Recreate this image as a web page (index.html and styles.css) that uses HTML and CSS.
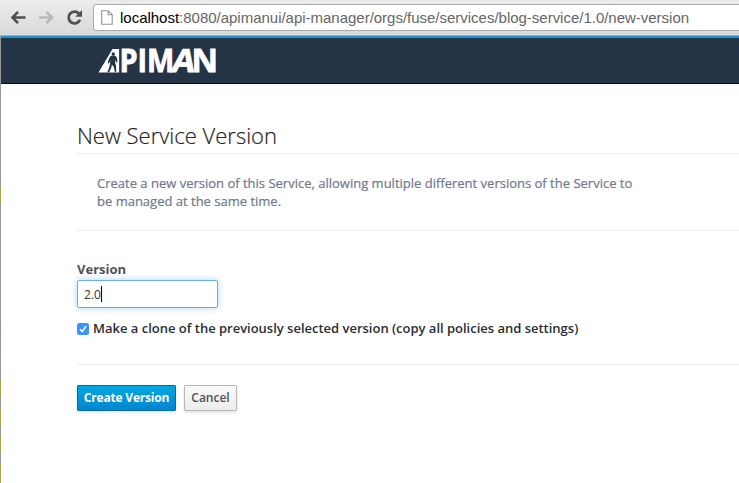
FILE: index.html
```html
<!DOCTYPE html>
<html lang="en">
<head>
<meta charset="utf-8">
<title>New Service Version</title>
<link rel="stylesheet" href="styles.css">
</head>
<body>
<div class="edge"></div>
<div class="window">
  <div class="toolbar">
    <svg class="nav" width="92" height="35" viewBox="0 0 92 35" fill="none">
      <path d="M25.5 17.5H12.5M18 11.8l-5.5 5.7 5.5 5.7" stroke="#505050" stroke-width="2.6"/>
      <path d="M39 17.5h13M46.5 11.8l5.5 5.7-5.5 5.7" stroke="#b9b9b9" stroke-width="2.6"/>
      <path d="M79 13.6A5.9 5.9 0 1 0 80 19.8" stroke="#505050" stroke-width="2.8"/>
      <path d="M82 10v6.8h-6.8z" fill="#505050"/>
    </svg>
    <div class="address">
      <svg class="page-icon" width="12" height="15" viewBox="0 0 12 15"><path d="M.7.7h6.5l4 4v9.6H.7zM7.2.7v4h4" fill="#fff" stroke="#929292" stroke-width="1.1"/></svg>
      <span class="url"><b>localhost</b>:8080/apimanui/api-manager/orgs/fuse/services/blog-service/1.0/new-version</span>
    </div>
  </div>
  <header class="masthead">
    <svg class="logo" width="130" height="45" viewBox="0 -10 130 45" role="img" aria-label="APIMAN">
      <path d="M0.5 24.5L14.5 1h6.6v23.5z" fill="#fff"/>
      <circle cx="15.3" cy="6" r="1.7" fill="#253347"/>
      <path d="M12 8.6l2.2-1 3 .2 1.8 2 .5 4.4-1.2.3-.9-3-.3 3 .9 3.2.3 6-1.5.2-1-4.8-1.9-2.7-.6 3.3-2.3 4.7-1.6-.3 1.9-4.8.8-4.1.3-3-1.1 2.9-1.7.5.9-3.6z" fill="#253347"/>
      <g class="wordmark">
        <text x="21.4" y="24.2" textLength="55" lengthAdjust="spacingAndGlyphs">PIM</text>
        <text x="0" y="0" transform="translate(72.5 24.2) skewX(-10)" textLength="23" lengthAdjust="spacingAndGlyphs">A</text>
        <text x="93.5" y="24.2" textLength="26.5" lengthAdjust="spacingAndGlyphs">N</text>
      </g>
    </svg>
  </header>
  <main class="content">
    <h1>New Service Version</h1>
    <p class="intro">Create a new version of this Service, allowing multiple different versions of the Service to<br>be managed at the same time.</p>
    <div class="form">
      <div class="label">Version</div>
      <div class="field">2.0<span class="caret"></span></div>
      <div class="check">
        <svg width="12" height="12" viewBox="0 0 12 12"><rect width="12" height="12" rx="2.5" fill="#3b93f7"/><path d="M3 6.3l2.2 2.3L9 3.2" fill="none" stroke="#fff" stroke-width="1.6"/></svg>
        <span>Make a clone of the previously selected version (copy all policies and settings)</span>
      </div>
    </div>
    <div class="actions">
      <div class="btn primary"><span>Create Version</span></div>
      <div class="btn"><span>Cancel</span></div>
    </div>
  </main>
</div>
</body>
</html>
```
FILE: styles.css
```css
* { box-sizing: border-box; }
body { margin: 0; height: 483px; overflow: hidden; display: flex; background: #fff; font-family: "Open Sans", sans-serif; }
.edge { width: 1px; flex: none; background: linear-gradient(#999 0 186px, #b0a44f 186px 203px, #999 203px 323px, #a18d90 323px 341px, #999 341px 380px, #b0a44f 380px 397px, #999 397px 408px, #b0a44f 408px 425px, #999 425px 436px, #b0a44f 436px 453px, #999 453px 464px, #b0a44f 464px); }
.window { flex: 1; min-width: 0; }
.toolbar { height: 36px; display: flex; margin-left: -1px; background: linear-gradient(#ececec, #d9d9d9); border-bottom: 1px solid #b5a9a3; }
.nav { flex: none; }
.address { flex: 1; margin: 4px -4px 0 1px; height: 27px; background: #fff; border: 1px solid #a9a9a9; border-radius: 3px; display: flex; align-items: center; padding-left: 7px; overflow: hidden; }
.page-icon { flex: none; }
.url { font: 15px/20px "Liberation Sans", sans-serif; letter-spacing: -.015px; color: #666; margin-left: 7px; white-space: nowrap; }
.url b { font-weight: 400; color: #000; }
.masthead { height: 48px; background: #253347; border-top: 2px solid #1a94d8; border-bottom: 1px solid #050a12; padding: 0 0 0 97px; }
.logo { display: block; }
.wordmark { font: 700 32px "Open Sans", sans-serif; fill: #fff; stroke: #fff; stroke-width: .8px; }
.content { padding: 36px 0 0 76px; }
h1 { margin: 0; height: 34px; border-bottom: 1px solid #ededed; font-size: 22px; line-height: 30px; font-weight: 300; color: #222; white-space: nowrap; -webkit-text-stroke: .2px #333; }
.intro { margin: 0; height: 77px; padding: 20px 0 0 20px; border-bottom: 1px solid #ededed; font-size: 13px; line-height: 18px; color: #6d798d; white-space: nowrap; -webkit-text-stroke: .2px #6d798d; }
.form { height: 134px; padding-top: 29px; border-bottom: 1px solid #ededed; }
.label { font-size: 13px; line-height: 18px; font-weight: 700; color: #4d5258; }
.field { margin-top: 2px; width: 141px; height: 28px; border: 1px solid #66afe9; border-radius: 2px; box-shadow: 0 0 6px rgba(102,175,233,.55); display: flex; align-items: center; padding-left: 6px; font-size: 12px; color: #333; }
.caret { width: 1px; height: 16px; background: #000; }
.check { margin-top: 12px; display: flex; align-items: center; gap: 4px; height: 18px; font-size: 13px; font-weight: 600; color: #292e34; white-space: nowrap; }
.check span { margin-top: -2px; letter-spacing: -.01px; }
.actions { display: flex; gap: 8px; padding-top: 20px; }
.btn { height: 26px; width: 53px; display: flex; align-items: center; justify-content: center; padding-bottom: 2px; border: 1px solid #b7b7b7; border-radius: 1px; background: linear-gradient(#fafafa, #ededed); box-shadow: 0 2px 3px rgba(0,0,0,.1); font-size: 12px; font-weight: 600; color: #4d5258; white-space: nowrap; }
.primary { width: 99px; border-color: #006e9c; background: linear-gradient(#00a8e1, #0085cf); color: #fff; font-weight: 700; letter-spacing: -.2px; }
```
